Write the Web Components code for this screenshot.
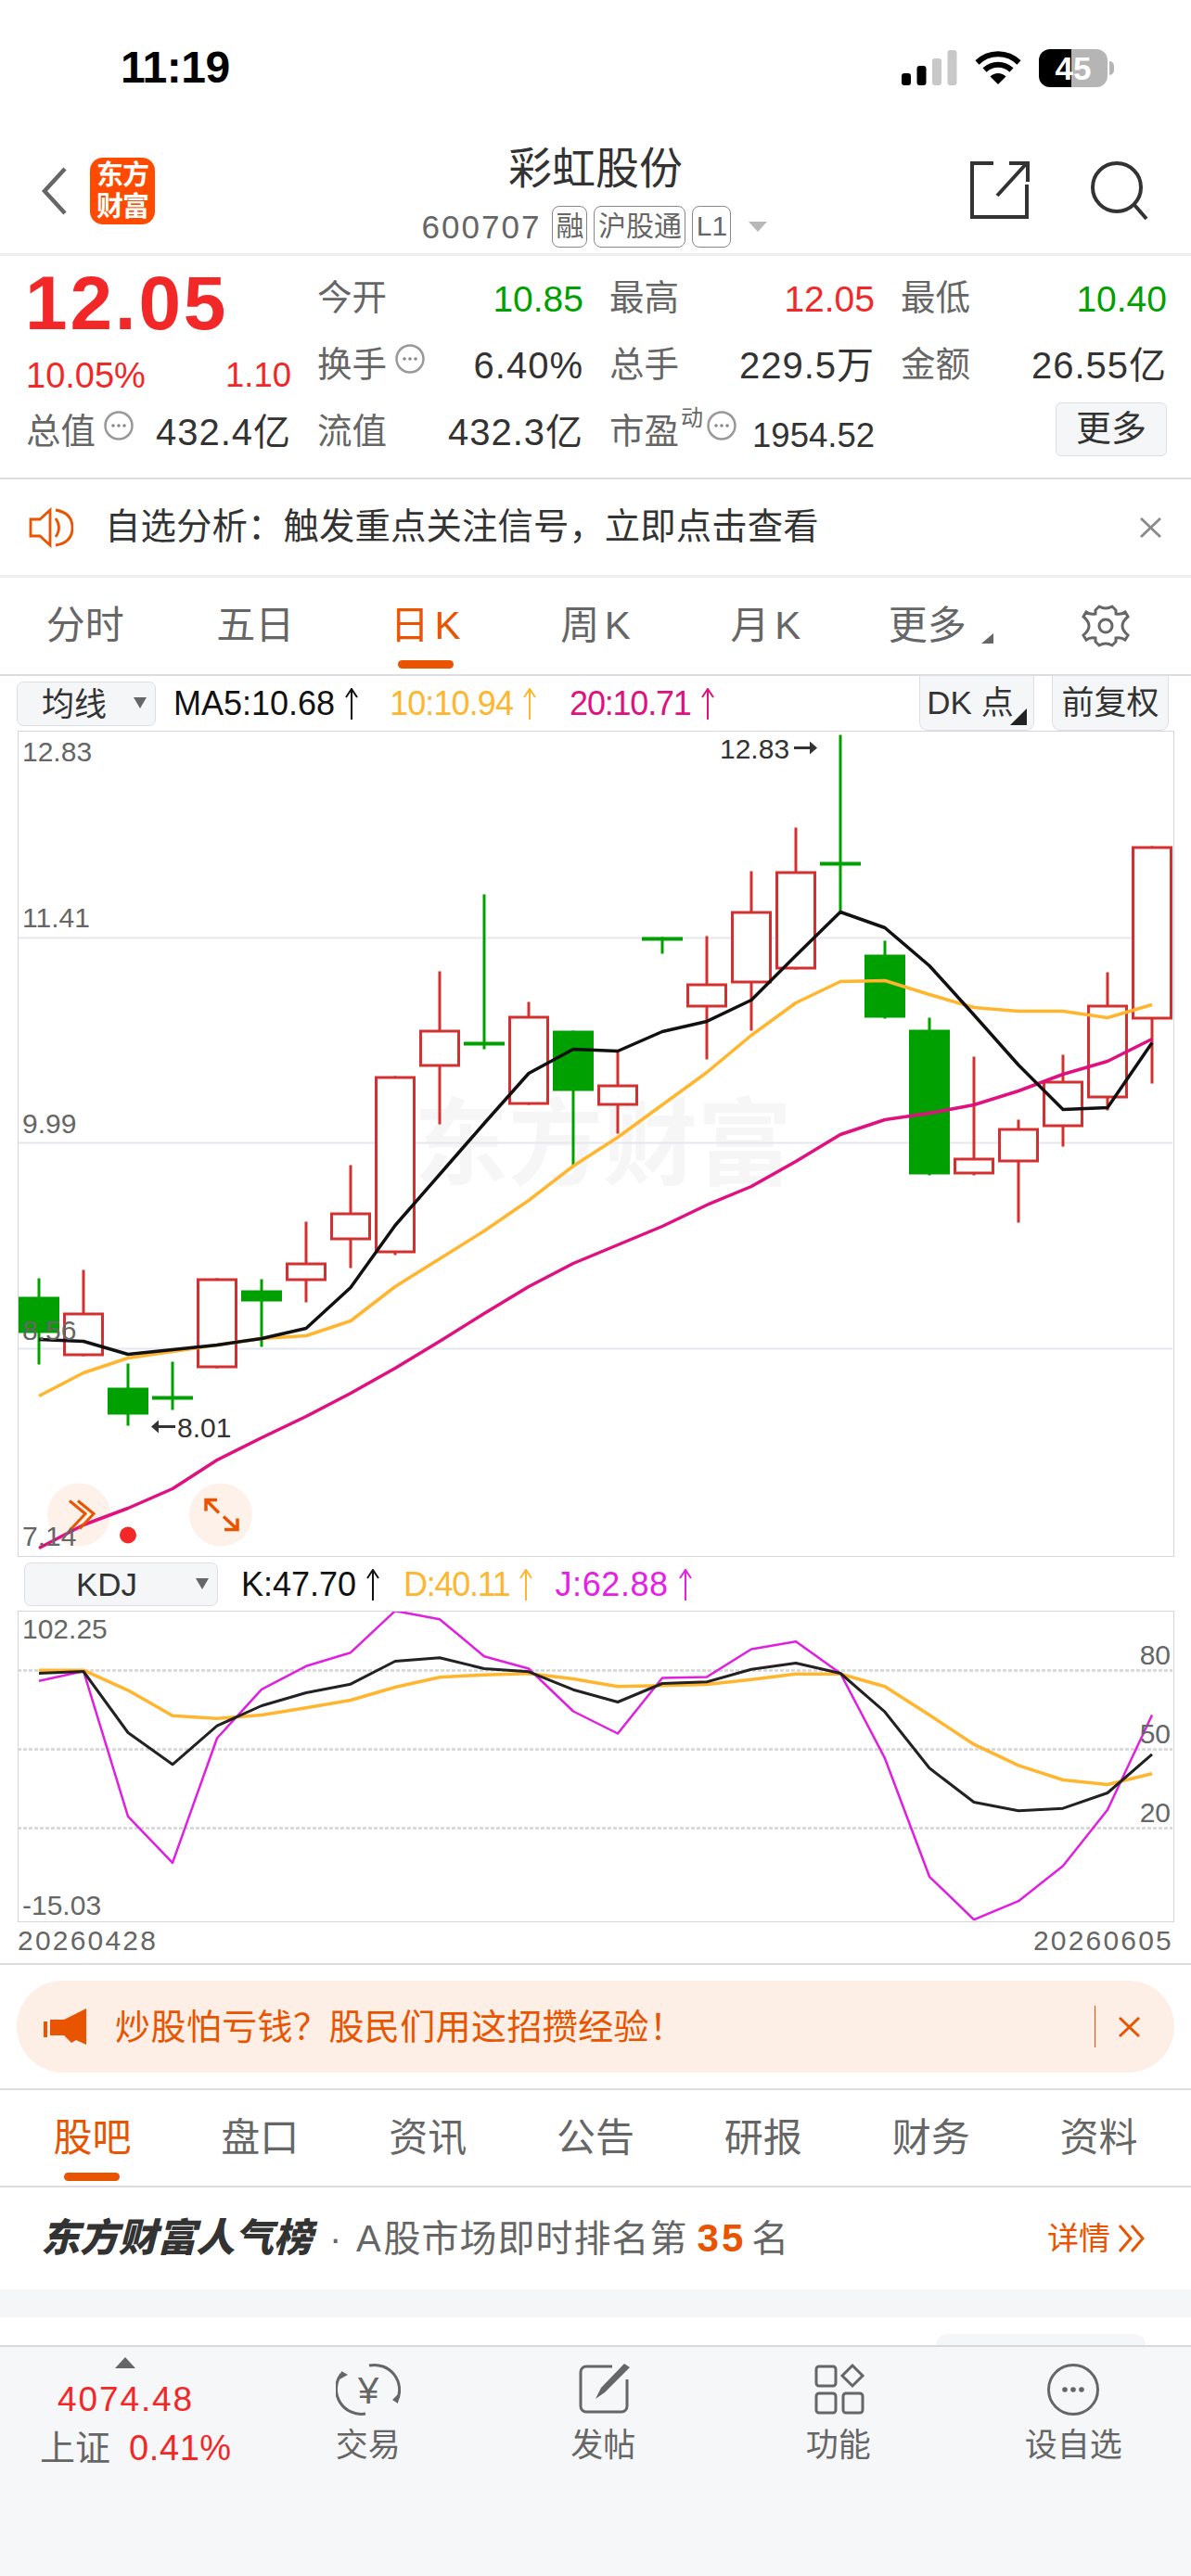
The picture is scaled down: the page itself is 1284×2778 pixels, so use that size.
<!DOCTYPE html>
<html lang="zh">
<head>
<meta charset="utf-8">
<title>彩虹股份</title>
<style>
  html, body { margin: 0; padding: 0; background: #fff; }
  body {
    width: 1284px;
    font-family: "Liberation Sans", "Noto Sans CJK SC", sans-serif;
    color: #333;
  }
  stock-page { display: flex; flex-direction: column; width: 1284px; height: 2778px; }
</style>
</head>
<body>
<stock-page>
  <status-bar></status-bar>
  <stock-header></stock-header>
  <quote-panel></quote-panel>
  <notice-bar>自选分析：触发重点关注信号，立即点击查看</notice-bar>
  <tab-strip padding="0" height="104" size="42" underline="60" bar-bottom="6">
    <tab-item>分时</tab-item>
    <tab-item>五日</tab-item>
    <tab-item active>日 K</tab-item>
    <tab-item>周 K</tab-item>
    <tab-item>月 K</tab-item>
    <tab-item caret>更多</tab-item>
    <tab-item><gear-icon></gear-icon></tab-item>
  </tab-strip>
  <ma-legend></ma-legend>
  <kline-chart></kline-chart>
  <kdj-legend></kdj-legend>
  <kdj-chart></kdj-chart>
  <date-axis></date-axis>
  <promo-banner>炒股怕亏钱？股民们用这招攒经验！</promo-banner>
  <tab-strip padding="9" height="103" size="42" underline="60" bar-bottom="5">
    <tab-item active>股吧</tab-item>
    <tab-item>盘口</tab-item>
    <tab-item>资讯</tab-item>
    <tab-item>公告</tab-item>
    <tab-item>研报</tab-item>
    <tab-item>财务</tab-item>
    <tab-item>资料</tab-item>
  </tab-strip>
  <rank-row></rank-row>
  <bottom-bar></bottom-bar>
</stock-page>

<script>
const FONT = '"Liberation Sans", "Noto Sans CJK SC", sans-serif';
const ORANGE = '#e85400';
const RED = '#f22727';
const GREEN = '#00a000';

function mount(el, html) {
  el.attachShadow({ mode: 'open' });
  el.shadowRoot.innerHTML = html;
}

class StatusBar extends HTMLElement {
  constructor() {
    super();
    mount(this, `
      <style>
        :host { display: flex; align-items: center; box-sizing: border-box; height: 150px; padding: 0 82px 4px 130px; color: #000; }
        .time { font: bold 48px/1 ${FONT}; letter-spacing: -.500px; }
        .right { margin-left: auto; display: flex; align-items: center; gap: 19px; }
        .batt { position: relative; width: 74px; height: 41px; border-radius: 12px; margin-right: 8px;
          background: linear-gradient(90deg, #000 35px, #b5b5b5 35px);
          color: #fff; font: bold 35px/41px ${FONT}; text-align: center; }
        .batt::after { content: ""; position: absolute; left: 76px; top: 13px; width: 5px; height: 15px; border-radius: 0 5px 5px 0; background: #b5b5b5; }
        svg { display: block; }
      </style>
      <div class="time">11:19</div>
      <div class="right">
        <svg width="60" height="38" viewBox="0 0 60 38">
          <rect x="0" y="25" width="10" height="13" rx="3"/>
          <rect x="16.5" y="17" width="10" height="21" rx="3"/>
          <rect x="33" y="9" width="10" height="29" rx="3" fill="#c8c8c8"/>
          <rect x="49.5" y="0" width="10" height="38" rx="3" fill="#c8c8c8"/>
        </svg>
        <svg width="50" height="36" viewBox="0 0 50 36">
          <path d="M2.5 12.5A32 32 0 0 1 47.5 12.5" fill="none" stroke="#000" stroke-width="6"/>
          <path d="M10.5 20.5A21 21 0 0 1 39.5 20.5" fill="none" stroke="#000" stroke-width="6"/>
          <path d="M25 36L16.500 27.500A12 12 0 0 1 33.500 27.500Z"/>
        </svg>
        <div class="batt">45</div>
      </div>
    `);
  }
}

class StockHeader extends HTMLElement {
  constructor() {
    super();
    mount(this, `
      <style>
        :host { display: grid; grid-template-columns: 1fr auto 1fr; box-sizing: border-box; height: 126px; border-bottom: 3px solid #eee; }
        .left, .right { display: flex; align-items: center; height: 112px; }
        .left { padding-left: 45px; gap: 25px; }
        .right { justify-content: flex-end; padding-right: 46px; gap: 66px; }
        .logo { width: 70px; height: 72px; border-radius: 14px; background: #ff4b00; color: #fff;
          font: bold 29px/34px ${FONT}; text-align: center; display: flex; flex-direction: column; justify-content: center; letter-spacing: -1px; }
        .mid { display: flex; flex-direction: column; align-items: center; padding-top: 8px; }
        .title { font: 47px/48px ${FONT}; color: #333; }
        .code { display: flex; align-items: center; gap: 7px; margin-top: 16px; height: 45px; color: #666; margin-left: -2px; }
        .num { font: 35px/45px ${FONT}; letter-spacing: 2px; margin-right: 5px; }
        .tag { box-sizing: border-box; height: 45px; border: 1.5px solid #888; border-radius: 8px; font: 30px/41px ${FONT}; text-align: center; color: #666; }
        .caret { width: 0; height: 0; border: 10px solid transparent; border-top: 11px solid #b8b8b8; border-bottom: 0; margin-left: 12px; }
        svg { display: block; }
      </style>
      <div class="left">
        <svg width="27" height="52" viewBox="0 0 27 52"><path d="M25 2L3 26L25 50" fill="none" stroke="#666" stroke-width="4.500"/></svg>
        <div class="logo"><span>东方</span><span>财富</span></div>
      </div>
      <div class="mid">
        <div class="title">彩虹股份</div>
        <div class="code">
          <span class="num">600707</span>
          <span class="tag" style="width:38px">融</span>
          <span class="tag" style="width:99px">沪股通</span>
          <span class="tag" style="width:42px">L1</span>
          <span class="caret"></span>
        </div>
      </div>
      <div class="right">
        <svg width="64" height="64" viewBox="1048 175 64 64">
          <path d="M1073 177H1050V235H1109V200M1077 212L1108 178M1090 177H1110V197" fill="none" stroke="#333" stroke-width="4"/>
        </svg>
        <svg width="62" height="64" viewBox="1177 175 62 64">
          <circle cx="1205" cy="203" r="26" fill="none" stroke="#333" stroke-width="4"/>
          <path d="M1224 222L1237 237" stroke="#333" stroke-width="4"/>
        </svg>
      </div>
    `);
  }
}

class InfoDot extends HTMLElement {
  constructor() {
    super();
    mount(this, `
      <style>
        :host { display: inline-block; width: 32px; height: 32px; }
        svg { display: block; }
      </style>
      <svg width="32" height="32" viewBox="0 0 32 32">
        <circle cx="16" cy="16" r="14.500" fill="none" stroke="#999" stroke-width="2.500"/>
        <circle cx="10" cy="16" r="1.800" fill="#888"/><circle cx="16" cy="16" r="1.800" fill="#888"/><circle cx="22" cy="16" r="1.800" fill="#888"/>
      </svg>
    `);
  }
}

class QuoteCell extends HTMLElement {
  constructor() {
    super();
    mount(this, `
      <style>
        :host { display: flex; justify-content: space-between; align-items: center; height: 72px; }
        .l { display: flex; align-items: center; font: 37.500px/1 ${FONT}; color: #666; white-space: nowrap; margin-left: -2px; }
        ::slotted(info-dot) { margin-left: 9px; transform: translateY(-7px); }
        .v { font: 40px/1 ${FONT}; color: #333; letter-spacing: 1px; white-space: nowrap; }
        :host([color]) .v { font-size: 39px; letter-spacing: 0; color: var(--c); }
      </style>
      <div class="l"><slot name="label"></slot></div>
      <div class="v"><slot></slot></div>
    `);
    if (this.hasAttribute('color')) this.style.setProperty('--c', this.getAttribute('color'));
  }
}

class QuotePanel extends HTMLElement {
  constructor() {
    super();
    mount(this, `
      <style>
        :host { display: grid; grid-template-columns: 284px 285px 284px 285px; grid-auto-rows: 72px; column-gap: 30px;
          box-sizing: border-box; height: 241px; padding: 10px 0 0 30px; border-bottom: 2px solid #dedee4; }
        .price { font: bold 82px/72px ${FONT}; color: ${RED}; letter-spacing: 2.800px; padding-top: 5px; margin-left: -3px; }
        .chg { display: flex; justify-content: space-between; align-items: center; height: 72px; padding-top: 22px; box-sizing: border-box;
          font: 38px/1 ${FONT}; color: ${RED}; margin-left: -2px; }
        .chg span + span { font-size: 36.500px; }
        .more { box-sizing: border-box; width: 120px; height: 58px; margin: 4px 0 0 auto; background: #f5f6f8; border: 1.5px solid #dddfe4; border-radius: 6px;
          font: 38px/54px ${FONT}; color: #333; text-align: center; }
        .sup { font: 24px/1 ${FONT}; transform: translateY(-15px); margin-left: 2px; color: #666; }
        .small { font-size: 36.500px; letter-spacing: 0; display: inline-block; transform: translateY(2px); }
      </style>
      <div class="price">12.05</div>
      <quote-cell color="${GREEN}"><span slot="label">今开</span>10.85</quote-cell>
      <quote-cell color="${RED}"><span slot="label">最高</span>12.05</quote-cell>
      <quote-cell color="${GREEN}"><span slot="label">最低</span>10.40</quote-cell>

      <div class="chg"><span>10.05%</span><span>1.10</span></div>
      <quote-cell><span slot="label">换手</span><info-dot slot="label"></info-dot>6.40%</quote-cell>
      <quote-cell><span slot="label">总手</span>229.5万</quote-cell>
      <quote-cell><span slot="label">金额</span>26.55亿</quote-cell>

      <quote-cell><span slot="label">总值</span><info-dot slot="label"></info-dot>432.4亿</quote-cell>
      <quote-cell><span slot="label">流值</span>432.3亿</quote-cell>
      <quote-cell><span slot="label">市盈</span><span slot="label" class="sup">动</span><info-dot slot="label" style="margin-left:4px"></info-dot><span class="small">1954.52</span></quote-cell>
      <div class="more">更多</div>
    `);
  }
}

class NoticeBar extends HTMLElement {
  constructor() {
    super();
    mount(this, `
      <style>
        :host { display: flex; align-items: center; box-sizing: border-box; height: 106px; padding: 0 31px; border-bottom: 3px solid #eee;
          font: 38.400px/1 ${FONT}; color: #333; }
        svg { display: block; flex: none; }
        .t { margin-left: 34px; white-space: nowrap; letter-spacing: .100px; }
        .x { margin-left: auto; }
      </style>
      <svg width="48" height="44" viewBox="31 546 48 44">
        <path d="M54 549L43 559H33V577H43L54 587Z" fill="none" stroke="${ORANGE}" stroke-width="2.800"/>
        <path d="M60 558Q67 568 60 578M60 549Q78 552 78 568Q78 584 60 587" fill="none" stroke="${ORANGE}" stroke-width="2.800"/>
      </svg>
      <span class="t"><slot></slot></span>
      <svg class="x" width="25" height="24" viewBox="0 0 25 24"><path d="M2 2L23 22M23 2L2 22" stroke="#8a8a8a" stroke-width="2.800"/></svg>
    `);
  }
}

class TabItem extends HTMLElement {
  constructor() {
    super();
    mount(this, `
      <style>
        :host { display: flex; align-items: center; justify-content: center; position: relative; height: 100%; color: #666; word-spacing: -6px; }
        :host([active]) { color: ${ORANGE}; }
        :host([caret]) { padding-right: 18px; box-sizing: border-box; }
        .bar { display: none; position: absolute; left: 50%; bottom: var(--bar-bottom, 5px); width: var(--bar, 60px); height: 9px; margin-left: calc(var(--bar, 60px) / -2); border-radius: 5px; background: ${ORANGE}; }
        :host([active]) .bar { display: block; }
        .caret { display: none; width: 0; height: 0; border-left: 13px solid transparent; border-bottom: 11px solid #666; margin: 26px 0 0 12px; position: absolute; left: calc(50% + 37px); }
        :host([caret]) .caret { display: block; }
      </style>
      <slot></slot>
      <span class="caret"></span>
      <span class="bar"></span>
    `);
  }
}

class TabStrip extends HTMLElement {
  constructor() {
    super();
    mount(this, `
      <style>
        :host { display: grid; grid-template-columns: repeat(7, 1fr); box-sizing: border-box; border-bottom: 2px solid #dcdce2; white-space: nowrap; }
      </style>
      <slot></slot>
    `);
    this.style.height = (+this.getAttribute('height') + 2) + 'px';
    this.style.padding = `0 ${this.getAttribute('padding')}px 0`;
    this.style.font = `${this.getAttribute('size')}px/1 ${FONT}`;
    this.style.setProperty('--bar', this.getAttribute('underline') + 'px');
    this.style.setProperty('--bar-bottom', this.getAttribute('bar-bottom') + 'px');
  }
}

class GearIcon extends HTMLElement {
  constructor() {
    super();
    mount(this, `
      <style>:host { display: block; width: 52px; height: 48px; } svg { display: block; }</style>
      <svg width="52" height="48" viewBox="0 0 52 48">
        <path d="M19 3Q26 7 33 3L37 7L37 11Q43 12 47 9L50 14Q44 19 44 24Q44 29 50 34L47 39Q43 36 37 37L37 41L33 45Q26 41 19 45L15 41L15 37Q9 36 5 39L2 34Q8 29 8 24Q8 19 2 14L5 9Q9 12 15 11L15 7Z" fill="none" stroke="#666" stroke-width="3"/>
        <circle cx="26" cy="24" r="7" fill="none" stroke="#666" stroke-width="3"/>
      </svg>
    `);
  }
}

class UpArrow extends HTMLElement {
  constructor() {
    super();
    mount(this, `
      <style>:host { display: inline-block; width: 16px; height: 34px; margin-left: 10px; } svg { display: block; }</style>
      <svg width="16" height="34" viewBox="0 0 16 34"><path d="M8 34V2M2 10L8 1L14 10" fill="none" stroke="currentColor" stroke-width="2"/></svg>
    `);
  }
}

class LegendValue extends HTMLElement {
  constructor() {
    super();
    mount(this, `
      <style>
        :host { display: inline-flex; align-items: center; font: 36px/1 ${FONT}; white-space: nowrap; }
      </style>
      <slot></slot><up-arrow></up-arrow>
    `);
    this.style.color = this.getAttribute('color');
    this.style.letterSpacing = this.getAttribute('ls') || '0';
    this.style.marginLeft = this.getAttribute('left') + 'px';
  }
}

class SelectBox extends HTMLElement {
  constructor() {
    super();
    mount(this, `
      <style>
        :host { display: flex; align-items: center; box-sizing: border-box; background: #f5f6f8; border: 1.5px solid #dddfe4; border-radius: 7px; font: 35px/1 ${FONT}; color: #333; position: relative; }
        .caret { position: absolute; top: 50%; right: 9px; margin-top: -7px; width: 0; height: 0; border: 7px solid transparent; border-top: 12px solid #666; border-bottom: 0; }
      </style>
      <slot></slot><span class="caret"></span>
    `);
  }
}

class MaLegend extends HTMLElement {
  constructor() {
    super();
    mount(this, `
      <style>
        :host { display: flex; align-items: flex-start; box-sizing: border-box; height: 59px; padding: 6px 24px 0 18px; }
        select-box { width: 150px; height: 48px; padding-left: 26px; flex: none; }
        legend-value { height: 48px; }
        .btn { box-sizing: border-box; height: 59px; margin-top: -6px; background: #f5f6f8; border: 1.5px solid #dddfe4; border-top: 0; border-radius: 0 0 9px 9px;
          font: 35px/58px ${FONT}; color: #333; text-align: center; position: relative; white-space: nowrap; }
        .dk { width: 124px; margin-left: auto; padding-right: 14px; }
        .dk::after { content: ""; position: absolute; right: 7px; bottom: 5px; width: 0; height: 0; border-left: 18px solid transparent; border-bottom: 18px solid #222; }
        .fq { width: 126px; margin-left: 19px; }
      </style>
      <select-box>均线</select-box>
      <legend-value color="#111" left="19">MA5:10.68</legend-value>
      <legend-value color="#ffb62e" left="33" ls="-0.900px">10:10.94</legend-value>
      <legend-value color="#e0107f" left="35" ls="-1.200px">20:10.71</legend-value>
      <div class="btn dk">DK 点</div>
      <div class="btn fq">前复权</div>
    `);
  }
}

// candle data in page pixels: type, wick top, wick bottom, body top, body bottom
const CANDLES = [
  ['g',1379,1472,1399,1438], ['r',1370,1463,1416,1463], ['g',1471,1538,1497,1526], ['g',1469,1521,1506,1506],
  ['r',1379,1476,1379,1476], ['g',1380,1453,1392,1404], ['r',1318,1405,1362,1382], ['r',1257,1368,1308,1338],
  ['r',1161,1354,1161,1352], ['r',1048,1213,1111,1151], ['g',965,1132,1124,1124], ['r',1081,1192,1096,1192],
  ['g',1112,1258,1112,1177], ['r',1133,1223,1170,1193], ['g',1011,1029,1011,1011], ['r',1010,1143,1061,1087],
  ['r',940,1112,983,1061], ['r',893,1046,940,1046], ['g',793,983,930,930], ['g',1015,1099,1030,1098],
  ['g',1098,1268,1111,1267], ['r',1140,1268,1249,1267], ['r',1208,1319,1217,1254], ['r',1138,1237,1166,1216],
  ['r',1049,1198,1084,1185], ['r',913,1169,913,1100]
];
const MA5 = [1445,1447,1461,1456,1451,1444,1433,1389,1322,1267,1212,1158,1132,1134,1113,1102,1079,1031,984,1001,1042,1095,1149,1197,1195,1125];
const MA10 = [1506,1481,1465,1458,1451,1444,1441,1425,1388,1358,1328,1295,1258,1227,1192,1157,1117,1082,1059,1058,1073,1087,1091,1091,1098,1084];
const MA20 = [1670,1645,1627,1606,1575,1551,1528,1503,1476,1447,1417,1388,1363,1343,1323,1300,1280,1253,1224,1208,1201,1192,1177,1159,1145,1121];
const cx = i => 42 + 48 * i;
const poly = (arr, color, width) =>
  `<polyline fill="none" stroke="${color}" stroke-width="${width}" stroke-linejoin="round" points="${arr.map((y, i) => cx(i) + ',' + y).join(' ')}"/>`;

class KlineChart extends HTMLElement {
  constructor() {
    super();
    const candles = CANDLES.map((c, i) => {
      const [t, hi, lo, top, bot] = c;
      const x = cx(i);
      const col = t === 'r' ? '#d33131' : GREEN;
      let s = `<line x1="${x}" x2="${x}" y1="${hi}" y2="${lo}" stroke="${col}" stroke-width="3"/>`;
      if (top === bot) {
        s += `<rect x="${x - 22}" y="${top}" width="44" height="4" fill="${col}"/>`;
      } else if (t === 'r') {
        s += `<rect x="${x - 20.5}" y="${top + 1.5}" width="41" height="${bot - top - 3}" fill="#fff" stroke="${col}" stroke-width="3"/>`;
      } else {
        s += `<rect x="${x - 22}" y="${top}" width="44" height="${bot - top}" fill="${col}"/>`;
      }
      return s;
    }).join('');
    const grid = [1012, 1233, 1455].map(y => `<line x1="19" x2="1266" y1="${y}" y2="${y}" stroke="#e4e7ee" stroke-width="2"/>`).join('');
    const labels = [['12.83', 821], ['11.41', 1000], ['9.99', 1222], ['8.56', 1445], ['7.14', 1667]]
      .map(l => `<text x="24" y="${l[1]}" class="axis">${l[0]}</text>`).join('');
    mount(this, `
      <style>
        :host { display: block; box-sizing: border-box; width: 1247px; height: 891px; margin-left: 18.500px; border: 1.500px solid #d6d6da; overflow: hidden; }
        svg { display: block; font-family: ${FONT}; }
        .axis { font-size: 30px; fill: #666; }
        .mark { font-size: 30px; fill: #333; }
        .wm { font-size: 102px; font-weight: bold; fill: #f6f6f6; }
      </style>
      <svg width="1244" height="888" viewBox="20 789.500 1244 888">
        <text x="446" y="1270" class="wm">东方财富</text>
        ${grid}
        ${candles}
        <circle cx="85" cy="1634" r="34" fill="#fdefe6" fill-opacity=".85"/>
        <circle cx="238" cy="1634" r="34" fill="#fdefe6" fill-opacity=".85"/>
        ${poly(MA20, '#e0107f', 3.5)}
        ${poly(MA10, '#ffb62e', 3.5)}
        ${poly(MA5, '#111', 3.5)}
        ${labels}
        <text x="776" y="818" class="mark">12.83</text>
        <path d="M856 807H875" stroke="#333" stroke-width="3"/><path d="M873 800L881 807L873 814Z" fill="#333"/>
        <path d="M170 1539H189" stroke="#333" stroke-width="3"/><path d="M171 1532L163 1539L171 1546Z" fill="#333"/>
        <text x="191" y="1550" class="mark">8.01</text>
        <path d="M75 1619L92 1633L77 1649M84 1619L101 1633L86 1649" fill="none" stroke="${ORANGE}" stroke-width="3"/>
        <path d="M222 1630V1618H234M222 1618L236 1632M256 1638V1650H242M256 1650L241 1636" fill="none" stroke="${ORANGE}" stroke-width="3.500"/>
        <circle cx="138" cy="1656" r="9" fill="${RED}"/>
      </svg>
    `);
  }
}

class KdjLegend extends HTMLElement {
  constructor() {
    super();
    mount(this, `
      <style>
        :host { display: flex; align-items: center; box-sizing: border-box; height: 58px; padding: 6px 0 5px 26px; }
        select-box { width: 209px; height: 47px; padding-left: 55px; flex: none; }
      </style>
      <select-box>KDJ</select-box>
      <legend-value color="#111" left="25">K:47.70</legend-value>
      <legend-value color="#ffb62e" left="25" ls="-1.300px">D:40.11</legend-value>
      <legend-value color="#e61ee6" left="23" ls="0.600px">J:62.88</legend-value>
    `);
  }
}

const toPage = arr => arr.map(y => +(1690 + y / 3).toFixed(1));
const K_LINE = toPage([345,339,537,640,515,450,408,380,306,295,330,340,398,438,378,373,332,312,345,470,652,762,790,782,732,607]);
const D_LINE = toPage([335,335,400,482,491,480,457,432,390,358,350,346,363,388,385,381,365,347,347,388,480,575,643,690,705,670]);
const J_LINE = toPage([370,338,808,958,555,397,322,278,143,170,290,330,468,540,360,357,267,242,345,620,1003,1142,1082,968,787,480]);

class KdjChart extends HTMLElement {
  constructor() {
    super();
    const dots = [1802, 1887, 1972].map(y => `<line x1="19" x2="1264" y1="${y}" y2="${y}" stroke="#d4d4d4" stroke-width="2.500" stroke-dasharray="4 2"/>`).join('');
    mount(this, `
      <style>
        :host { display: block; box-sizing: border-box; width: 1247px; height: 336px; margin-left: 18.500px; border: 1.500px solid #d6d6da; overflow: hidden; }
        svg { display: block; font-family: ${FONT}; }
        text { font-size: 30px; fill: #666; }
      </style>
      <svg width="1244" height="333" viewBox="20 1738.500 1244 333">
        ${dots}
        ${poly(J_LINE, '#e01fe0', 2.5)}
        ${poly(D_LINE, '#ffb62e', 3.5)}
        ${poly(K_LINE, '#222', 3)}
        <text x="24" y="1767">102.25</text>
        <text x="24" y="2065">-15.03</text>
        <text x="1262" y="1795" text-anchor="end">80</text>
        <text x="1262" y="1880" text-anchor="end">50</text>
        <text x="1262" y="1965" text-anchor="end">20</text>
      </svg>
    `);
  }
}

class DateAxis extends HTMLElement {
  constructor() {
    super();
    mount(this, `
      <style>
        :host { display: flex; justify-content: space-between; align-items: center; box-sizing: border-box; height: 46px; padding: 0 19px 4px 19px;
          border-bottom: 2px solid #dcdce2; font: 30px/1 ${FONT}; letter-spacing: 2.200px; color: #666; }
      </style>
      <span>20260428</span><span>20260605</span>
    `);
  }
}

class PromoBanner extends HTMLElement {
  constructor() {
    super();
    mount(this, `
      <style>
        :host { display: block; box-sizing: border-box; height: 135px; padding: 17px 18px 0; border-bottom: 2px solid #dcdce2; }
        .pill { display: flex; align-items: center; box-sizing: border-box; height: 99px; padding: 0 36px 0 29px; border-radius: 50px; background: #fdefe6;
          font: 38px/1 ${FONT}; color: ${ORANGE}; white-space: nowrap; }
        svg { display: block; flex: none; }
        .t { margin-left: 31px; letter-spacing: .400px; }
        .sep { margin-left: auto; width: 1.500px; height: 45px; background: ${ORANGE}; }
        .x { margin-left: 24px; }
      </style>
      <div class="pill">
        <svg width="46" height="40" viewBox="0 0 46 40">
          <rect x="0" y="14" width="4" height="17" fill="${ORANGE}"/>
          <path d="M46 0V39L35 34L30 37L22 29H7V12H22Z" fill="${ORANGE}"/>
        </svg>
        <span class="t"><slot></slot></span>
        <span class="sep"></span>
        <svg class="x" width="25" height="24" viewBox="0 0 25 24"><path d="M2 2L23 22M23 2L2 22" stroke="${ORANGE}" stroke-width="3"/></svg>
      </div>
    `);
  }
}

class RankRow extends HTMLElement {
  constructor() {
    super();
    mount(this, `
      <style>
        :host { display: flex; align-items: center; box-sizing: border-box; height: 110px; padding: 0 49px 0 44px; white-space: nowrap; color: #666; font: 40px/1 ${FONT}; }
        .brand { font: italic 900 42px/1 ${FONT}; color: #333; width: 293px; letter-spacing: -.200px; }
        .dot { margin-left: 18px; width: 29px; }
        .a { letter-spacing: 1px; word-spacing: -8px; }
        .n { font: bold 42px/1 ${FONT}; color: ${ORANGE}; margin: 0 6px 0 10px; letter-spacing: 3px; }
        .more { margin-left: auto; display: flex; align-items: center; font-size: 34px; color: ${ORANGE}; }
        svg { display: block; margin-left: 8px; }
      </style>
      <span class="brand">东方财富人气榜</span>
      <span class="dot">·</span>
      <span class="a">A 股市场即时排名第</span>
      <span class="n">35</span>
      <span>名</span>
      <span class="more">详情<svg width="30" height="32" viewBox="0 0 30 32"><path d="M2 2L14 16L2 30M15 2L27 16L15 30" fill="none" stroke="${ORANGE}" stroke-width="3"/></svg></span>
    `);
  }
}

class BarItem extends HTMLElement {
  constructor() {
    super();
    mount(this, `
      <style>
        :host { display: flex; flex-direction: column; align-items: center; padding-top: 16px; color: #666; font: 35px/40px ${FONT}; white-space: nowrap; }
        .icon { height: 60px; margin-bottom: 10px; }
      </style>
      <div class="icon"><slot name="icon"></slot></div>
      <slot></slot>
    `);
  }
}

class BottomBar extends HTMLElement {
  constructor() {
    super();
    const st = 'fill="none" stroke="#666" stroke-width="3"';
    mount(this, `
      <style>
        :host { display: grid; grid-template-columns: 270px repeat(4, 1fr); box-sizing: border-box; flex: 1; background: #f6f7f9; border-top: 2.500px solid #d8d8de; }
        .idx { padding: 11px 0 0 43px; display: flex; flex-direction: column; align-items: flex-start; white-space: nowrap; }
        .tri { width: 0; height: 0; border: 11px solid transparent; border-bottom: 12px solid #666; border-top: 0; margin-left: 81px; }
        .pt { font: 37px/37px ${FONT}; color: ${RED}; margin: 15px 0 0 19px; letter-spacing: 1.900px; }
        .pc { font: 38px/40px ${FONT}; color: #666; margin-top: 14px; display: flex; align-items: center; }
        .pc b { font-weight: normal; color: ${RED}; margin-left: 20px; letter-spacing: .600px; }
        svg { display: block; }
        svg text { font: 40px ${FONT}; fill: #666; }
      </style>
      <div class="idx">
        <div class="tri"></div>
        <div class="pt">4074.48</div>
        <div class="pc">上证<b>0.41%</b></div>
      </div>
      <bar-item>
        <svg slot="icon" width="70" height="60" viewBox="361 2547 70 60">
          <path d="M397 2551A27 27 0 0 1 427 2589M393 2603A27 27 0 0 1 367 2560" ${st}/>
          <path d="M365 2566L367 2557L374 2561ZM429 2581L428 2592L422 2588Z" fill="#666"/>
          <text x="396" y="2592" text-anchor="middle">¥</text>
        </svg>交易
      </bar-item>
      <bar-item>
        <svg slot="icon" width="70" height="60" viewBox="615 2547 70 60">
          <path d="M660 2552H632A6 6 0 0 0 626 2558V2595A6 6 0 0 0 632 2601H670A6 6 0 0 0 676 2595V2566" ${st}/>
          <path d="M673 2549L679 2553L652 2580L642 2587L648 2575Z" fill="#666"/>
        </svg>发帖
      </bar-item>
      <bar-item>
        <svg slot="icon" width="70" height="60" viewBox="869 2547 70 60">
          <rect x="880" y="2552" width="21" height="21" rx="3" ${st}/>
          <path d="M919 2551L930 2562L919 2573L908 2562Z" ${st}/>
          <rect x="880" y="2581" width="21" height="21" rx="3" ${st}/>
          <rect x="909" y="2581" width="21" height="21" rx="3" ${st}/>
        </svg>功能
      </bar-item>
      <bar-item>
        <svg slot="icon" width="70" height="60" viewBox="1122 2547 70 60">
          <circle cx="1157" cy="2577" r="26.500" ${st}/>
          <circle cx="1148" cy="2577" r="2.800" fill="#666"/><circle cx="1157" cy="2577" r="2.800" fill="#666"/><circle cx="1166" cy="2577" r="2.800" fill="#666"/>
        </svg>设自选
      </bar-item>
    `);
  }
}

class FootGap extends HTMLElement {
  constructor() {
    super();
    mount(this, `
      <style>
        :host { display: flex; flex-direction: column; height: 60px; }
        .band { height: 30px; background: #f5f6f8; }
        .tabwrap { height: 30px; position: relative; background: #fff; display: flex; justify-content: flex-end; padding-right: 49px; align-items: flex-end; }
        .tab { width: 226px; height: 12px; border-radius: 12px 12px 0 0; background: #f5f6f8; }
      </style>
      <div class="band"></div>
      <div class="tabwrap"><div class="tab"></div></div>
    `);
  }
}

class StockPage extends HTMLElement {
  connectedCallback() {
    // the grey band sits between the rank row and the bottom bar
    if (!this.querySelector('foot-gap')) {
      this.querySelector('rank-row').after(document.createElement('foot-gap'));
    }
  }
}

customElements.define('status-bar', StatusBar);
customElements.define('stock-header', StockHeader);
customElements.define('info-dot', InfoDot);
customElements.define('quote-cell', QuoteCell);
customElements.define('quote-panel', QuotePanel);
customElements.define('notice-bar', NoticeBar);
customElements.define('tab-item', TabItem);
customElements.define('tab-strip', TabStrip);
customElements.define('gear-icon', GearIcon);
customElements.define('up-arrow', UpArrow);
customElements.define('legend-value', LegendValue);
customElements.define('select-box', SelectBox);
customElements.define('ma-legend', MaLegend);
customElements.define('kline-chart', KlineChart);
customElements.define('kdj-legend', KdjLegend);
customElements.define('kdj-chart', KdjChart);
customElements.define('date-axis', DateAxis);
customElements.define('promo-banner', PromoBanner);
customElements.define('rank-row', RankRow);
customElements.define('bar-item', BarItem);
customElements.define('bottom-bar', BottomBar);
customElements.define('foot-gap', FootGap);
customElements.define('stock-page', StockPage);
</script>
</body>
</html>
